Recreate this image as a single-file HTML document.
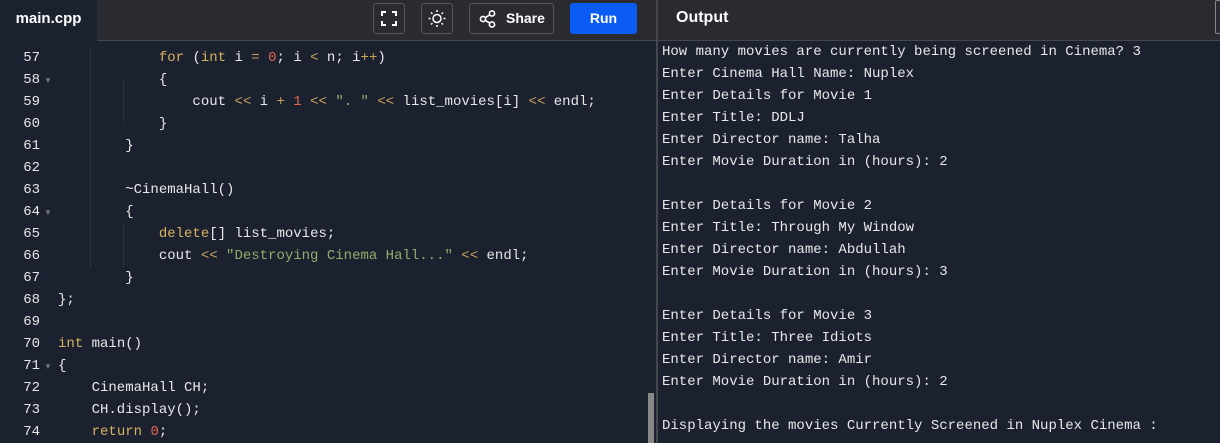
<!DOCTYPE html>
<html><head><style>
*{margin:0;padding:0;box-sizing:border-box}
body{width:1220px;height:443px;overflow:hidden;background:#1c2130;font-family:"Liberation Sans",sans-serif;position:relative}
.hdr{position:absolute;left:0;top:0;width:1220px;height:41px;background:#2a2b30;border-bottom:1px solid #45474d}
.tab{position:absolute;left:0;top:0;width:97px;height:42px;background:#1c2130;color:#fff;font-weight:bold;font-size:15px;line-height:38px;text-align:center}
.btn{position:absolute;top:3px;height:31px;border:1px solid #55575d;border-radius:3px;color:#fff;font-weight:bold;font-size:14px}
.run{position:absolute;left:570px;top:3px;width:67px;height:31px;background:#0b5cf5;border-radius:3px;color:#fff;font-weight:bold;font-size:14px;line-height:31px;text-align:center}
.div{position:absolute;left:656px;top:0;width:2px;height:443px;background:#45474d}
.out{position:absolute;left:676px;top:0;line-height:35px;color:#fff;font-weight:bold;font-size:16px}
.mono{font-family:"Liberation Mono",monospace;font-size:14px;white-space:pre;position:absolute;line-height:22px}
.ln{left:0;width:40px;text-align:right;top:47px;color:#e6e6e6}
.code{left:58px;top:47px;color:#e8e8e8}
.o{left:662px;top:41px;color:#e8e8e8}
.k{color:#d6b25e}.n{color:#e0674c}.op{color:#c9a45a}.s{color:#98a96a}
.guide{position:absolute;border-left:1px dotted #3a4050;width:0}
.fold{position:absolute;left:44px;color:#777;font-size:8px}
</style></head><body>
<div class="hdr"></div>
<div class="tab">main.cpp</div>
<div class="btn" style="left:373px;width:32px"><svg width="30" height="29" viewBox="0 0 30 29"><path d="M8 12V8h4M18 8h4v4M22 17v4h-4M12 21H8v-4" stroke="#fff" stroke-width="2" fill="none"/></svg></div>
<div class="btn" style="left:421px;width:32px"><svg width="30" height="29" viewBox="0 0 30 29"><circle cx="15" cy="14.5" r="4" stroke="#fff" stroke-width="1.5" fill="none"/><path d="M15 6v2M15 21v2M6.5 14.5h2M21.5 14.5h2M9 8.5l1.4 1.4M19.6 19.1l1.4 1.4M9 20.5l1.4-1.4M19.6 9.9l1.4-1.4" stroke="#fff" stroke-width="1.5"/></svg></div>
<div class="btn" style="left:469px;width:85px"><svg style="position:absolute;left:9px;top:6px" width="18" height="18" viewBox="0 0 18 18"><circle cx="4" cy="9" r="2.6" stroke="#fff" stroke-width="1.6" fill="none"/><circle cx="13" cy="3.5" r="2.6" stroke="#fff" stroke-width="1.6" fill="none"/><circle cx="13" cy="14.5" r="2.6" stroke="#fff" stroke-width="1.6" fill="none"/><path d="M6.3 7.6l4.4-2.7M6.3 10.4l4.4 2.7" stroke="#fff" stroke-width="1.6"/></svg><span style="position:absolute;left:36px;top:6px">Share</span></div>
<div class="run">Run</div>
<div class="div"></div>
<div class="out">Output</div>
<div style="position:absolute;left:1215px;top:0;width:8px;height:34px;border:1px solid #888;border-radius:2px"></div>
<div style="position:absolute;left:648px;top:393px;width:6px;height:50px;background:#888"></div>
<div class="guide" style="left:90px;top:47px;height:220px"></div>
<div class="guide" style="left:123px;top:80px;height:44px"></div>
<div class="guide" style="left:123px;top:223px;height:44px"></div>
<div class="fold" style="top:76px">▼</div>
<div class="fold" style="top:208px">▼</div>
<div class="fold" style="top:362px">▼</div>
<div class="mono ln">57
58
59
60
61
62
63
64
65
66
67
68
69
70
71
72
73
74</div>
<div class="mono code">            <span class="k">for</span> (<span class="k">int</span> i <span class="op">=</span> <span class="n">0</span>; i <span class="op">&lt;</span> n; i<span class="op">++</span>)
            {
                cout <span class="op">&lt;&lt;</span> i <span class="op">+</span> <span class="n">1</span> <span class="op">&lt;&lt;</span> <span class="s">". "</span> <span class="op">&lt;&lt;</span> list_movies[i] <span class="op">&lt;&lt;</span> endl;
            }
        }

        ~CinemaHall()
        {
            <span class="k">delete</span>[] list_movies;
            cout <span class="op">&lt;&lt;</span> <span class="s">"Destroying Cinema Hall..."</span> <span class="op">&lt;&lt;</span> endl;
        }
};

<span class="k">int</span> main()
{
    CinemaHall CH;
    CH.display();
    <span class="k">return</span> <span class="n">0</span>;</div>
<div class="mono o">How many movies are currently being screened in Cinema? 3
Enter Cinema Hall Name: Nuplex
Enter Details for Movie 1
Enter Title: DDLJ
Enter Director name: Talha
Enter Movie Duration in (hours): 2

Enter Details for Movie 2
Enter Title: Through My Window
Enter Director name: Abdullah
Enter Movie Duration in (hours): 3

Enter Details for Movie 3
Enter Title: Three Idiots
Enter Director name: Amir
Enter Movie Duration in (hours): 2

Displaying the movies Currently Screened in Nuplex Cinema :</div>
</body></html>
